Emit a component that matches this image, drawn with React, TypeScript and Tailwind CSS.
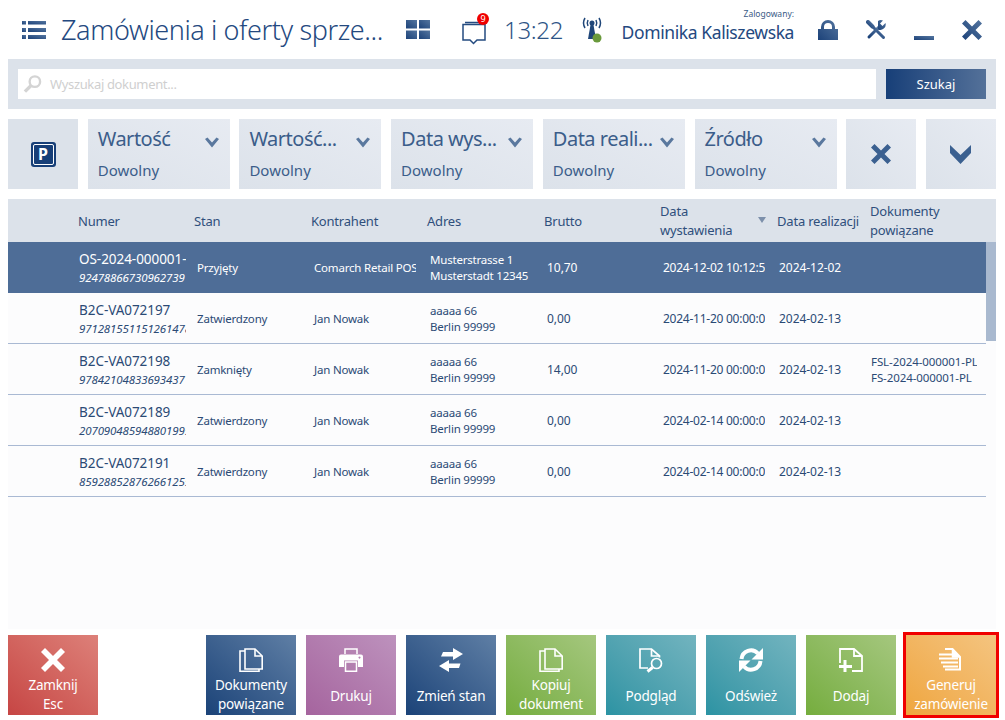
import React from "react";

const NAVY = "#244b80";

function Grad({ id, children, w, h, className }: { id: string; children: React.ReactNode; w: number; h: number; className?: string }) {
  return (
    <svg width={w} height={h} viewBox={`0 0 ${w} ${h}`} className={className}>
      <defs>
        <linearGradient id={id} x1="0" y1="1" x2="1" y2="0">
          <stop offset="0" stopColor="#1c4279" />
          <stop offset="1" stopColor="#54759f" />
        </linearGradient>
      </defs>
      <g fill={`url(#${id})`}>{children}</g>
    </svg>
  );
}

function Chevron({ className }: { className?: string }) {
  return (
    <svg width="14" height="11" viewBox="0 0 14 11" className={className}>
      <path d="M0 2 L2.500 0.500 L7 5.500 L11.500 0.500 L14 2 L7 10.500 Z" fill="#5a789e" />
    </svg>
  );
}

function Filter({ title }: { title: string }) {
  return (
    <div className="w-[142px] h-[70px] bg-linear-to-tr from-[#dce2ea] to-[#e7ebf2] pl-[10px] pr-[10px] flex flex-col">
      <div className="flex items-center justify-between h-[40px]">
        <span className="text-[20px] leading-[40px] text-[#3b5d8a] tracking-[-0.5px] whitespace-nowrap">{title}</span>
        <Chevron className="mr-[1px] mt-[6px] shrink-0" />
      </div>
      <div className="text-[15px] leading-[22px] text-[#3b5d8a]">Dowolny</div>
    </div>
  );
}

const COLS = "grid grid-cols-[70px_116px_117px_116px_117px_116px_117px_93px_116px]";

type Row = { no: string; code: string; state: string; who: string; a1: string; a2: string; brutto: string; date: string; real: string; docs?: string[] };

const ROWS: Row[] = [
  { no: "OS-2024-000001-PL", code: "9247886673096273915", state: "Przyjęty", who: "Comarch Retail POS", a1: "Musterstrasse 1", a2: "Musterstadt 12345", brutto: "10,70", date: "2024-12-02 10:12:52", real: "2024-12-02" },
  { no: "B2C-VA072197", code: "9712815511512614788", state: "Zatwierdzony", who: "Jan Nowak", a1: "aaaaa 66", a2: "Berlin 99999", brutto: "0,00", date: "2024-11-20 00:00:00", real: "2024-02-13" },
  { no: "B2C-VA072198", code: "9784210483369343711", state: "Zamknięty", who: "Jan Nowak", a1: "aaaaa 66", a2: "Berlin 99999", brutto: "14,00", date: "2024-11-20 00:00:00", real: "2024-02-13", docs: ["FSL-2024-000001-PL", "FS-2024-000001-PL"] },
  { no: "B2C-VA072189", code: "2070904859488019955", state: "Zatwierdzony", who: "Jan Nowak", a1: "aaaaa 66", a2: "Berlin 99999", brutto: "0,00", date: "2024-02-14 00:00:00", real: "2024-02-13" },
  { no: "B2C-VA072191", code: "8592885287626612555", state: "Zatwierdzony", who: "Jan Nowak", a1: "aaaaa 66", a2: "Berlin 99999", brutto: "0,00", date: "2024-02-14 00:00:00", real: "2024-02-13" },
];

function TableRow({ row, active }: { row: Row; active: boolean }) {
  const tone = active ? "text-white" : "text-[#2b4a75]";
  return (
    <div className={`${COLS} items-center ${active ? "h-[51px] bg-[#4e6d97]" : "h-[51px] pt-[1px] border-b border-[#a9b9d3]"} ${tone} text-[11.5px] tracking-[-0.2px]`}>
      <div />
      <div className="overflow-hidden w-[108px] pl-[1px]">
        <div className="text-[13.5px] leading-[19px] tracking-[-0.05px] whitespace-nowrap">{row.no}</div>
        <div className="text-[11.5px] leading-[17px] italic tracking-[-0.12px] whitespace-nowrap">{row.code}</div>
      </div>
      <div className="pl-[3px] whitespace-nowrap">{row.state}</div>
      <div className="pl-[3px] w-[105px] overflow-hidden whitespace-nowrap">{row.who}</div>
      <div className="pl-[3px] leading-[16px] whitespace-nowrap">
        <div>{row.a1}</div>
        <div>{row.a2}</div>
      </div>
      <div className="pl-[3px] text-[12px] tracking-[-0.05px]">{row.brutto}</div>
      <div className="pl-[3px] w-[105px] overflow-hidden whitespace-nowrap text-[12px] tracking-[-0.25px]">{row.date}</div>
      <div className="pl-[2px] text-[12px] tracking-[-0.05px]">{row.real}</div>
      <div className="pl-[1px] w-[107px] overflow-hidden leading-[16px] whitespace-nowrap tracking-[-0.08px]">
        {row.docs?.map((d) => (
          <div key={d}>{d}</div>
        ))}
      </div>
    </div>
  );
}

const W = "#ffffff";

const ICONS: Record<string, React.ReactNode> = {
  close: <path d="M4 0 L12 8 L20 0 L24 4 L16 12 L24 20 L20 24 L12 16 L4 24 L0 20 L8 12 L0 4 Z" fill={W} />,
  docs: (
    <g fill="none" stroke={W} strokeWidth="1.600">
      <path d="M6 1 H16 L23.200 8 V21 H6 Z" />
      <path d="M16 1 V8 H23" />
      <path d="M6 3 H1 V23.200 H20 V21" />
    </g>
  ),
  print: (
    <g fill={W}>
      <path d="M6 6 V1 H18 V6" fill="none" stroke={W} strokeWidth="1.500" />
      <path
        fillRule="evenodd"
        d="M2 6.500 H22 A2 2 0 0 1 24 8.500 V19 H19 V12.500 H5 V19 H0 V8.500 A2 2 0 0 1 2 6.500 Z M20.500 8.500 A1 1 0 1 0 20.501 8.500 Z"
      />
      <path d="M6.500 14 H17.500 V23.200 H6.500 Z" fill="none" stroke={W} strokeWidth="1.500" />
    </g>
  ),
  swap: (
    <g fill={W}>
      <path d="M4 4 H14 V0 L24 6 L14 12 V8.500 H2 Z" />
      <path d="M21.500 15.500 H10 V12 L0 18 L10 24 V20 H20 Z" />
    </g>
  ),
  preview: (
    <g fill="none" stroke={W} strokeWidth="1.700">
      <path d="M9 20 H1 V1 H12.500 L20.500 8 V9.500" />
      <path d="M12.500 1 V8 H20.500" />
      <circle cx="17.500" cy="15.500" r="5" />
      <path d="M13.500 19.500 L8.500 23.500" strokeWidth="3" />
    </g>
  ),
  refresh: (
    <g>
      <g>
        <path d="M2.500 11 A9.500 9.500 0 0 1 19 5.500" fill="none" stroke={W} strokeWidth="4" />
        <path d="M24 0 V11.500 H12.500 Z" fill={W} />
      </g>
      <g transform="rotate(180 12 12)">
        <path d="M2.500 11 A9.500 9.500 0 0 1 19 5.500" fill="none" stroke={W} strokeWidth="4" />
        <path d="M24 0 V11.500 H12.500 Z" fill={W} />
      </g>
    </g>
  ),
  add: (
    <g fill="none" stroke={W} strokeWidth="1.800">
      <path d="M1 15 V1 H15 L23 8 V23 H13" />
      <path d="M15 1 V8 H23" />
      <path d="M6 12 V24 M0 18.500 H13" strokeWidth="3" />
    </g>
  ),
  gen: (
    <g>
      <path d="M6 1 H13.500 L21 9 V21.500 H6" fill="none" stroke={W} strokeWidth="2" />
      <path d="M13.500 1 V9 H21" fill={W} stroke={W} strokeWidth="1.500" />
      <path d="M0 6.500 H13 M0 10.500 H19 M2 14.500 H19 M4 18.500 H19" stroke={W} strokeWidth="2" />
    </g>
  ),
};

function Tile({ label, icon, cls }: { label: string[]; icon: string; cls: string }) {
  return (
    <div className={`w-[90px] h-[80px] flex flex-col items-center text-white ${cls}`}>
      <svg width="24" height="24" viewBox="0 0 24 24" className="mt-[13px] shrink-0" overflow="visible">
        {ICONS[icon]}
      </svg>
      <div className={`flex-1 flex flex-col items-center justify-center text-[13.5px] leading-[19px] tracking-[-0.2px] text-center ${label.length > 1 ? "pt-[3px]" : "pt-[5px]"}`}>
        {label.map((l) => (
          <div key={l} className="whitespace-nowrap">{l}</div>
        ))}
      </div>
    </div>
  );
}

export default function App() {
  return (
    <div className="w-[1005px] h-[720px] overflow-hidden bg-white font-['Noto_Sans',sans-serif]">
      {/* top bar */}
      <header className="h-[59px] flex items-center pl-[22px]">
        <Grad id="g-menu" w={24} h={18}>
          <rect x="0" y="0" width="4" height="3.500" />
          <rect x="6" y="0" width="18" height="3.500" />
          <rect x="0" y="7" width="4" height="4" />
          <rect x="6" y="7" width="18" height="4" />
          <rect x="0" y="14" width="4" height="4" />
          <rect x="6" y="14" width="18" height="4" />
        </Grad>
        <div className="ml-[15px] mt-[2px] w-[345px] text-[27px] font-light tracking-[-0.4px] text-[#24497f] whitespace-nowrap">Zamówienia i oferty sprze...</div>
        <Grad id="g-tile" w={24} h={19}>
          <rect x="0" y="0" width="11" height="8.500" />
          <rect x="13" y="0" width="11" height="8.500" />
          <rect x="0" y="10.500" width="11" height="8.500" />
          <rect x="13" y="10.500" width="11" height="8.500" />
        </Grad>
        <div className="relative ml-[32px] w-[24px] h-[24px]">
          <svg width="24" height="24" viewBox="0 0 24 24" className="mt-[3px]">
            <path d="M3 1.500 H22 M1 3.500 H23 V19 H15 L11.500 22.500 L8 19 H1 Z" fill="none" stroke={NAVY} strokeWidth="1.500" />
          </svg>
          <div className="absolute left-[15px] top-[-5px] w-[12px] h-[12px] rounded-full bg-[#f00000] text-white text-[9px] leading-[12px] text-center">9</div>
        </div>
        <div className="ml-[18px] w-[76px] text-[24px] font-light tracking-[-0.3px] text-[#2e5486]">13:22</div>
        <svg width="24" height="28" viewBox="0 0 24 28" className="mt-[-2px]">
          <g fill="none" stroke="#1f4679" strokeWidth="1.500">
            <path d="M5 3 Q2 8 5 13 M8 5 Q6.500 8 8 11 M19 3 Q22 8 19 13 M16 5 Q17.500 8 16 11" />
          </g>
          <circle cx="12" cy="8" r="2.500" fill="#1f4679" />
          <path d="M10.500 10 H13.500 L16 24 H8 Z" fill="#1f4679" />
          <circle cx="17" cy="23" r="4.500" fill="#6a9a3c" />
        </svg>
        <div className="relative ml-[18px] w-[172px] h-[59px]">
          <div className="absolute right-0 top-[8px] text-[8.500px] leading-[12px] text-[#3a5b86]">Zalogowany:</div>
          <div className="absolute right-0 top-[19px] text-[17.500px] leading-[26px] tracking-[-0.4px] text-[#24497f] whitespace-nowrap">Dominika Kaliszewska</div>
        </div>
        <Grad id="g-lock" w={20} h={20} className="ml-[24px]">
          <path d="M0 9 H3 V7 A7 7 0 0 1 17 7 V9 H20 V20 H0 Z M6 9 H14 V7 A4 4 0 0 0 6 7 Z" fillRule="evenodd" />
        </Grad>
        <Grad id="g-tool" w={20} h={20} className="ml-[28px]">
          <path d="M2 2 L6.500 6.500" stroke="url(#g-tool)" strokeWidth="4" strokeLinecap="round" />
          <path d="M6.500 6.500 L17.500 17.500" stroke="url(#g-tool)" strokeWidth="3" strokeLinecap="round" />
          <path d="M3 17 L13 7" stroke="url(#g-tool)" strokeWidth="3" strokeLinecap="round" />
          <path d="M12 1 A5.500 5.500 0 0 1 17 0.500 L14 3.500 L16.500 6 L19.500 3 A5.500 5.500 0 0 1 12 9.500 Z" />
        </Grad>
        <Grad id="g-min" w={20} h={20} className="ml-[28px]">
          <rect x="0" y="16" width="20" height="4" />
        </Grad>
        <Grad id="g-x" w={20} h={20} className="ml-[28px]">
          <path d="M3.500 0 L10 6.500 L16.500 0 L20 3.500 L13.500 10 L20 16.500 L16.500 20 L10 13.500 L3.500 20 L0 16.500 L6.500 10 L0 3.500 Z" />
        </Grad>
      </header>

      {/* search */}
      <div className="ml-[8px] w-[988px] h-[50px] bg-[#dce2ea] flex items-center gap-[10px] px-[10px]">
        <div className="flex-1 h-[30px] bg-white flex items-center pl-[5px]">
          <svg width="19" height="19" viewBox="0 0 20 20">
            <circle cx="12.500" cy="7" r="5.500" fill="none" stroke="#d4d4d4" strokeWidth="2.500" />
            <path d="M8.500 11 L2 17.500" stroke="#d4d4d4" strokeWidth="3.500" />
          </svg>
          <span className="ml-[8px] mt-[2px] text-[13px] tracking-[-0.35px] text-[#cfcfcf]">Wyszukaj dokument...</span>
        </div>
        <div className="w-[100px] h-[30px] bg-linear-to-r from-[#173f78] to-[#547199] text-white text-[13px] leading-[30px] text-center">Szukaj</div>
      </div>

      {/* filters */}
      <div className="ml-[8px] mt-[10px] w-[988px] flex justify-between">
        <div className="w-[70px] h-[70px] bg-[#dce2ea] flex items-center justify-center">
          <div className="w-[25px] h-[25px] rounded-[3px] bg-[#173f78] p-[2px]">
            <div className="w-full h-full rounded-[2px] border border-white bg-[#173f78] text-white text-[16px] font-bold leading-[19px] text-center">P</div>
          </div>
        </div>
        {["Wartość", "Wartość...", "Data wys...", "Data reali...", "Źródło"].map((t) => (
          <Filter key={t} title={t} />
        ))}
        <div className="w-[70px] h-[70px] bg-linear-to-tr from-[#dce2ea] to-[#e7ebf2] flex items-center justify-center">
          <svg width="20" height="20" viewBox="0 0 20 20">
            <path d="M3.500 0 L10 6.500 L16.500 0 L20 3.500 L13.500 10 L20 16.500 L16.500 20 L10 13.500 L3.500 20 L0 16.500 L6.500 10 L0 3.500 Z" fill="#3b6090" />
          </svg>
        </div>
        <div className="w-[70px] h-[70px] bg-linear-to-tr from-[#dce2ea] to-[#e7ebf2] flex items-center justify-center">
          <svg width="21" height="19" viewBox="0 0 21 19">
            <path d="M0 0 L10.500 10 L21 0 V8 L10.500 19 L0 8 Z" fill="#3b6090" />
          </svg>
        </div>
      </div>

      {/* table */}
      <div className="ml-[8px] mt-[10px] w-[988px] h-[430px] bg-[#fcfcfd] flex flex-col">
        <div className={`${COLS} h-[43px] pt-[1px] items-center bg-[#dce2ea] text-[13px] tracking-[-0.2px] text-[#2f4f7c] leading-[19px] shrink-0`}>
          <div />
          <div>Numer</div>
          <div>Stan</div>
          <div>Kontrahent</div>
          <div>Adres</div>
          <div>Brutto</div>
          <div className="relative">
            Data
            <br />
            wystawienia
            <span className="absolute right-[11px] top-[15px] w-0 h-0 border-x-[4px] border-x-transparent border-t-[6px] border-t-[#7d90ab]" />
          </div>
          <div className="whitespace-nowrap">Data realizacji</div>
          <div>
            Dokumenty
            <br />
            powiązane
          </div>
        </div>
        <div className="flex flex-1 min-h-0">
          <div className="w-[978px]">
            {ROWS.map((r, i) => (
              <TableRow key={r.no} row={r} active={i === 0} />
            ))}
          </div>
          <div className="w-[10px]">
            <div className="h-[99px] bg-[#a9b9cf]" />
          </div>
        </div>
      </div>

      {/* actions */}
      <div className="ml-[8px] mt-[6px] w-[988px] flex">
        <Tile label={["Zamknij", "Esc"]} icon="close" cls="bg-linear-to-tr from-[#c64544] to-[#dd8079]" />
        <div className="ml-[108px] flex gap-[10px]">
          <Tile label={["Dokumenty", "powiązane"]} icon="docs" cls="bg-linear-to-tr from-[#1b4378] to-[#5f7fa5]" />
          <Tile label={["Drukuj"]} icon="print" cls="bg-linear-to-tr from-[#a5649e] to-[#bd92bd]" />
          <Tile label={["Zmień stan"]} icon="swap" cls="bg-linear-to-tr from-[#1b4378] to-[#5f7fa5]" />
          <Tile label={["Kopiuj", "dokument"]} icon="docs" cls="bg-linear-to-tr from-[#75ad3d] to-[#a5c77e]" />
          <Tile label={["Podgląd"]} icon="preview" cls="bg-linear-to-tr from-[#2b93a3] to-[#72b4bf]" />
          <Tile label={["Odśwież"]} icon="refresh" cls="bg-linear-to-tr from-[#2b93a3] to-[#72b4bf]" />
          <Tile label={["Dodaj"]} icon="add" cls="bg-linear-to-tr from-[#75ad3d] to-[#a5c77e]" />
          <div className="outline-[3px] outline-[#f00000]">
            <Tile label={["Generuj", "zamówienie"]} icon="gen" cls="bg-linear-to-tr from-[#efa63d] to-[#f4c47f]" />
          </div>
        </div>
      </div>
    </div>
  );
}
